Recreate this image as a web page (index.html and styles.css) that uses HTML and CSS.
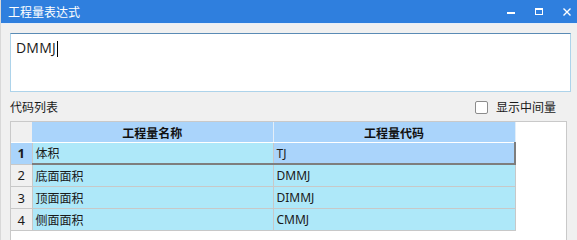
FILE: index.html
```html
<!DOCTYPE html>
<html>
<head>
<meta charset="utf-8">
<link rel="stylesheet" href="styles.css">
</head>
<body>
<div class="window">
  <div class="titlebar">
    <span class="title">工程量表达式</span>
    <div class="controls">
      <svg class="ctl" width="10" height="10" viewBox="0 0 10 10"><rect x="1" y="5" width="8" height="2" fill="#fff"/></svg>
      <svg class="ctl" width="10" height="10" viewBox="0 0 10 10"><rect x="1.5" y="1.5" width="7" height="6" fill="none" stroke="#fff" stroke-width="1"/><rect x="1" y="1" width="8" height="2" fill="#fff"/></svg>
      <svg class="ctl" width="10" height="10" viewBox="0 0 10 10"><path d="M1.5 1.5 L8.5 8.5 M8.5 1.5 L1.5 8.5" stroke="#fff" stroke-width="1.4"/></svg>
    </div>
  </div>
  <div class="content">
    <div class="editor"><span class="expr">DMMJ</span><span class="caret"></span></div>
    <div class="labelrow">
      <span class="label">代码列表</span>
      <label class="check"><span class="box"></span><span>显示中间量</span></label>
    </div>
    <div class="grid">
      <table class="tbl">
        <colgroup><col class="c-num"><col class="c-name"><col class="c-code"></colgroup>
        <thead>
          <tr><th class="num"></th><th>工程量名称</th><th>工程量代码</th></tr>
        </thead>
        <tbody>
          <tr class="sel"><td class="num">1</td><td>体积</td><td class="cur">TJ</td></tr>
          <tr><td class="num">2</td><td>底面面积</td><td>DMMJ</td></tr>
          <tr><td class="num">3</td><td>顶面面积</td><td>DIMMJ</td></tr>
          <tr><td class="num">4</td><td>侧面面积</td><td>CMMJ</td></tr>
        </tbody>
      </table>
    </div>
  </div>
</div>
</body>
</html>
```
FILE: styles.css
```css
html, body {
  margin: 0;
  padding: 0;
}
body {
  width: 577px;
  height: 240px;
  overflow: hidden;
  background: #f0f0f0;
  font-family: "Noto Sans", "Noto Sans CJK SC", sans-serif;
  font-size: 12px;
  color: #1a1a1a;
}
.window {
  height: 240px;
  display: flex;
  flex-direction: column;
  border-left: 1px solid #d8d8d8;
  box-sizing: border-box;
}
.titlebar {
  height: 23px;
  background: #2f7fde;
  display: flex;
  align-items: center;
  justify-content: space-between;
  padding: 0 5px 0 7px;
  border-bottom: 1px solid #e6eef8;
  flex: none;
}
.title {
  color: #fff;
  font-family: "Noto Sans CJK SC", sans-serif;
  font-size: 12px;
  line-height: 14px;
}
.controls {
  display: flex;
  gap: 18px;
  align-items: center;
  margin-top: 1px;
}
.ctl { display: block; }
.content {
  flex: 1;
  display: flex;
  flex-direction: column;
  padding: 9px 6px 0 9px;
  min-height: 0;
}
.editor {
  height: 59px;
  box-sizing: border-box;
  background: #fff;
  border: 1px solid #add3ea;
  border-top-color: #5a8bb5;
  padding: 4px 5px;
  display: flex;
  align-items: flex-start;
}
.expr {
  font-family: "Open Sans", "Noto Sans", sans-serif;
  font-size: 14px;
  line-height: 20px;
  color: #1a1a1a;
  letter-spacing: 0.2px;
}
.caret {
  width: 1px;
  height: 16px;
  background: #000;
  margin-top: 3px;
  margin-left: 1px;
}
.labelrow {
  height: 28px;
  display: flex;
  align-items: center;
  justify-content: space-between;
  padding-right: 15px;
  margin-top: 1px;
}
.label {
  font-family: "Noto Sans CJK SC", sans-serif;
  line-height: 14px;
}
.check {
  display: flex;
  align-items: center;
  gap: 8px;
  font-family: "Noto Sans CJK SC", sans-serif;
  line-height: 14px;
}
.box {
  width: 13px;
  height: 13px;
  box-sizing: border-box;
  border: 1px solid #8c8c8c;
  border-radius: 2px;
  background: #fff;
}
.grid {
  flex: 1;
  width: 557px;
  box-sizing: border-box;
  background: #fff;
  border: 1px solid #c9c9c9;
  border-bottom: none;
  overflow: hidden;
}
.tbl {
  border-collapse: collapse;
  table-layout: fixed;
  width: 504px;
}
.c-num { width: 21px; }
.c-name { width: 241px; }
.c-code { width: 242px; }
.tbl th {
  height: 20px;
  padding: 0;
  background: #aad4fb;
  font-family: "Noto Sans CJK SC", sans-serif;
  font-weight: bold;
  font-size: 12px;
  color: #111;
  text-align: center;
  border-right: 1px solid #e3eef8;
  border-bottom: 1px solid #ffffff;
}
.tbl th.num {
  background: #f0f0f0;
  border-right: none;
}
.tbl td {
  height: 21px;
  padding: 0 0 0 3px;
  background: #aee8f9;
  border: 1px solid #c8c8c8;
  border-top: none;
  border-left: none;
  font-family: "Noto Sans", "Noto Sans CJK SC", sans-serif;
  font-size: 12px;
  white-space: nowrap;
  overflow: hidden;
}
.tbl td.num {
  background: #f0f0f0;
  text-align: center;
  padding: 0;
  font-size: 13px;
}
.tbl tr.sel td {
  height: 20px;
  border-bottom: 2px solid #7e7e7e;
}
.tbl tr.sel td.num {
  background: #aad4fb;
  font-weight: bold;
  border-bottom: 1px solid #c8c8c8;
}
.tbl tr.sel td.cur {
  background: #aad4fb;
  border-right: 2px solid #7e7e7e;
}
```
